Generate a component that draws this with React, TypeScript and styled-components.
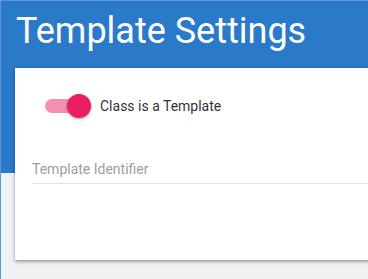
import styled, { createGlobalStyle } from 'styled-components';

const GlobalStyle = createGlobalStyle`
  html, body {
    margin: 0;
    padding: 0;
  }
  body {
    font-family: Roboto, 'Liberation Sans', sans-serif;
    overflow: hidden;
  }
`;

const Page = styled.div`
  width: 368px;
  height: 279px;
  box-sizing: border-box;
  border-top: 1px solid #5b98d6;
  border-left: 1px solid #5b98d6;
  background: linear-gradient(#2a7ac9 0 172px, #f0f1f3 172px);
  overflow: hidden;
`;

const Title = styled.h1`
  margin: 0;
  padding: 9px 0 0 15px;
  height: 58px;
  color: #fff;
  font-size: 36px;
  font-weight: 400;
  line-height: 42px;
  white-space: nowrap;
`;

const Card = styled.div`
  margin-left: 14px;
  width: 420px;
  height: 192px;
  box-sizing: border-box;
  padding: 26px 0 0 17px;
  background: #fff;
  box-shadow: 0 2px 4px rgba(0, 0, 0, 0.25), 0 1px 2px rgba(0, 0, 0, 0.2);
`;

const SwitchRow = styled.label`
  display: flex;
  align-items: center;
  gap: 9px;
  height: 24px;
  margin-left: 13px;
  color: rgba(0, 0, 0, 0.84);
  font-size: 14px;
`;

const Switch = styled.span<{ checked: boolean }>`
  position: relative;
  width: 46px;
  height: 24px;
  &::before {
    content: '';
    position: absolute;
    left: 0;
    top: 5px;
    width: 40px;
    height: 14px;
    border-radius: 7px;
    background: ${p => (p.checked ? '#f48fb1' : '#bdbdbd')};
  }
  &::after {
    content: '';
    position: absolute;
    top: 0;
    left: ${p => (p.checked ? '22px' : '0')};
    width: 24px;
    height: 24px;
    border-radius: 50%;
    background: ${p => (p.checked ? '#e91e63' : '#fafafa')};
    box-shadow: 0 1px 3px rgba(0, 0, 0, 0.35);
  }
`;

const Field = styled.div`
  margin-top: 42px;
  padding-bottom: 5px;
  border-bottom: 1px solid #e2e2e2;
  color: #9e9e9e;
  font-size: 14px;
  line-height: 18px;
`;

export default function App() {
  return (
    <>
      <GlobalStyle />
      <Page>
        <Title>Template Settings</Title>
        <Card>
          <SwitchRow>
            <Switch checked />
            Class is a Template
          </SwitchRow>
          <Field>Template Identifier</Field>
        </Card>
      </Page>
    </>
  );
}
